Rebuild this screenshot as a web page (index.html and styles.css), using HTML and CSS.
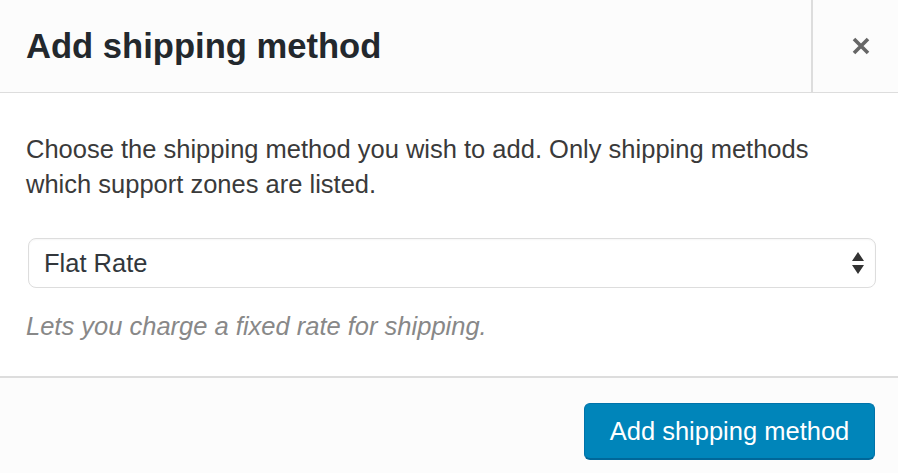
FILE: index.html
```html
<!DOCTYPE html>
<html>
<head>
<meta charset="utf-8">
<link rel="stylesheet" href="styles.css">
</head>
<body>
<div class="modal">
  <header class="modal-header">
    <h1 class="modal-title">Add shipping method</h1>
    <button class="modal-close" aria-label="Close">
      <svg width="20" height="20" viewBox="0 0 20 20"><path d="M3 3 L17 17 M17 3 L3 17" stroke="#666" stroke-width="3.6" stroke-linecap="butt"/></svg>
    </button>
  </header>
  <main class="modal-body">
    <p class="intro">Choose the shipping method you wish to add. Only shipping methods which support zones are listed.</p>
    <div class="select">
      <span class="select-value">Flat Rate</span>
      <svg class="select-arrows" width="14" height="24" viewBox="0 0 14 24"><path d="M7 1 L13 10 L1 10 Z M1 14 L13 14 L7 23 Z" fill="#333"/></svg>
    </div>
    <p class="desc">Lets you charge a fixed rate for shipping.</p>
  </main>
  <footer class="modal-footer">
    <button class="btn-primary">Add shipping method</button>
  </footer>
</div>
</body>
</html>
```
FILE: styles.css
```css
html, body {
  margin: 0;
  padding: 0;
  height: 100%;
  background: #fff;
  font-family: "Liberation Sans", Arial, sans-serif;
}
.modal {
  display: flex;
  flex-direction: column;
  height: 100vh;
  width: 100%;
}
.modal-header {
  display: flex;
  align-items: stretch;
  height: 92px;
  background: #fcfcfc;
  border-bottom: 1px solid #dddddd;
}
.modal-title {
  flex: 1;
  margin: 0;
  padding-left: 26px;
  display: flex;
  align-items: center;
  font-size: 34.6px;
  font-weight: 700;
  color: #23282d;
}
.modal-close {
  width: 87px;
  border: 0;
  border-left: 2px solid #dddddd;
  background: transparent;
  display: flex;
  align-items: center;
  justify-content: center;
  padding: 0 0 0 10px;
}
.modal-body {
  flex: 1;
  padding: 39px 22px 0 26px;
  background: #fff;
  border-bottom: 2px solid #dddddd;
}
.intro {
  margin: 0;
  font-size: 25.5px;
  line-height: 35px;
  color: #3a3a3a;
}
.select {
  margin: 36px 0 0 2px;
  height: 48px;
  border: 1px solid #dddddd;
  border-radius: 8px;
  display: flex;
  align-items: center;
  justify-content: space-between;
  padding: 0 10px 0 15px;
  box-shadow: inset 0 1px 2px rgba(0,0,0,0.04);
}
.select-value {
  font-size: 25.5px;
  color: #32373c;
}
.desc {
  margin: 21px 0 0;
  font-size: 25.5px;
  line-height: 35px;
  font-style: italic;
  color: #888;
}
.modal-footer {
  height: 95px;
  background: #fcfcfc;
  display: flex;
  align-items: flex-start;
  justify-content: flex-end;
  padding: 25px 23px 0 0;
  box-sizing: border-box;
}
.btn-primary {
  height: 57px;
  width: 291px;
  background: #0085ba;
  border: 1px solid #0073aa;
  border-bottom: 2px solid #006799;
  border-radius: 6px;
  color: #fff;
  font-family: "Liberation Sans", Arial, sans-serif;
  font-size: 25.5px;
  padding: 0;
}
```
